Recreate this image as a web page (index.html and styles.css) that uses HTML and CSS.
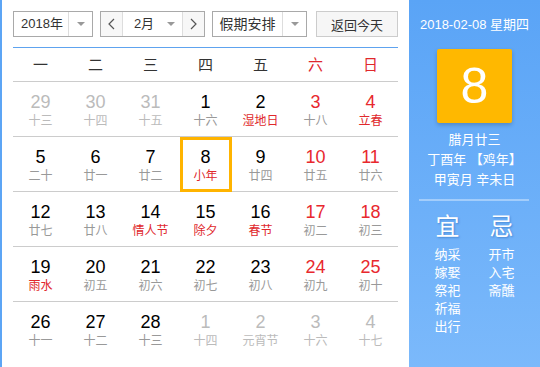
FILE: index.html
```html
<!DOCTYPE html>
<html lang="zh-CN">
<head>
    <meta charset="UTF-8">
    <meta name="viewport" content="width=device-width, initial-scale=1.0">
    <title>万年历</title>
    <link rel="stylesheet" href="styles.css">
</head>
<body>
    <div class="calendar">
        <div class="main">
            <div class="toolbar">
                <div class="select year-select">
                    <span class="select-text">2018年</span>
                    <span class="select-arrow"><i class="caret"></i></span>
                </div>
                <div class="select month-select">
                    <span class="nav prev"><svg width="7" height="12" viewBox="0 0 7 12"><polyline points="6,1 1,6 6,11" fill="none" stroke="#555" stroke-width="1.2"/></svg></span>
                    <span class="select-text">2月</span>
                    <span class="select-arrow plain"><i class="caret"></i></span>
                    <span class="nav next"><svg width="7" height="12" viewBox="0 0 7 12"><polyline points="1,1 6,6 1,11" fill="none" stroke="#555" stroke-width="1.2"/></svg></span>
                </div>
                <div class="select holiday-select">
                    <span class="select-text">假期安排</span>
                    <span class="select-arrow"><i class="caret"></i></span>
                </div>
                <button class="today-btn">返回今天</button>
            </div>

            <div class="weekdays">
                <span>一</span>
                <span>二</span>
                <span>三</span>
                <span>四</span>
                <span>五</span>
                <span class="red">六</span>
                <span class="red">日</span>
            </div>

            <div class="days">
                <div class="day other"><span class="num">29</span><span class="lunar">十三</span></div>
                <div class="day other"><span class="num">30</span><span class="lunar">十四</span></div>
                <div class="day other"><span class="num">31</span><span class="lunar">十五</span></div>
                <div class="day"><span class="num">1</span><span class="lunar">十六</span></div>
                <div class="day festival"><span class="num">2</span><span class="lunar">湿地日</span></div>
                <div class="day weekend"><span class="num">3</span><span class="lunar">十八</span></div>
                <div class="day weekend festival"><span class="num">4</span><span class="lunar">立春</span></div>

                <div class="day"><span class="num">5</span><span class="lunar">二十</span></div>
                <div class="day"><span class="num">6</span><span class="lunar">廿一</span></div>
                <div class="day"><span class="num">7</span><span class="lunar">廿二</span></div>
                <div class="day today festival"><span class="num">8</span><span class="lunar">小年</span></div>
                <div class="day"><span class="num">9</span><span class="lunar">廿四</span></div>
                <div class="day weekend"><span class="num">10</span><span class="lunar">廿五</span></div>
                <div class="day weekend"><span class="num">11</span><span class="lunar">廿六</span></div>

                <div class="day"><span class="num">12</span><span class="lunar">廿七</span></div>
                <div class="day"><span class="num">13</span><span class="lunar">廿八</span></div>
                <div class="day festival"><span class="num">14</span><span class="lunar">情人节</span></div>
                <div class="day festival"><span class="num">15</span><span class="lunar">除夕</span></div>
                <div class="day festival"><span class="num">16</span><span class="lunar">春节</span></div>
                <div class="day weekend"><span class="num">17</span><span class="lunar">初二</span></div>
                <div class="day weekend"><span class="num">18</span><span class="lunar">初三</span></div>

                <div class="day festival"><span class="num">19</span><span class="lunar">雨水</span></div>
                <div class="day"><span class="num">20</span><span class="lunar">初五</span></div>
                <div class="day"><span class="num">21</span><span class="lunar">初六</span></div>
                <div class="day"><span class="num">22</span><span class="lunar">初七</span></div>
                <div class="day"><span class="num">23</span><span class="lunar">初八</span></div>
                <div class="day weekend"><span class="num">24</span><span class="lunar">初九</span></div>
                <div class="day weekend"><span class="num">25</span><span class="lunar">初十</span></div>

                <div class="day last"><span class="num">26</span><span class="lunar">十一</span></div>
                <div class="day last"><span class="num">27</span><span class="lunar">十二</span></div>
                <div class="day last"><span class="num">28</span><span class="lunar">十三</span></div>
                <div class="day last other"><span class="num">1</span><span class="lunar">十四</span></div>
                <div class="day last other"><span class="num">2</span><span class="lunar">元宵节</span></div>
                <div class="day last other"><span class="num">3</span><span class="lunar">十六</span></div>
                <div class="day last other"><span class="num">4</span><span class="lunar">十七</span></div>
            </div>
        </div>

        <aside class="side">
            <div class="side-date">2018-02-08 星期四</div>
            <div class="big-day">8</div>
            <div class="lunar-info">
                <div>腊月廿三</div>
                <div>丁酉年 【鸡年】</div>
                <div>甲寅月 辛未日</div>
            </div>
            <div class="side-line"></div>
            <div class="almanac">
                <div class="almanac-col">
                    <div class="almanac-title">宜</div>
                    <div>纳采</div>
                    <div>嫁娶</div>
                    <div>祭祀</div>
                    <div>祈福</div>
                    <div>出行</div>
                </div>
                <div class="almanac-col">
                    <div class="almanac-title">忌</div>
                    <div>开市</div>
                    <div>入宅</div>
                    <div>斋醮</div>
                </div>
            </div>
        </aside>
    </div>
</body>
</html>
```

FILE: styles.css
```css
body {
    margin: 0;
    background-color: #fff;
    font-family: "Liberation Sans", "Noto Sans CJK SC", sans-serif;
}

.calendar {
    display: flex;
    height: 367px;
    border-left: 2px solid #5ca5f5;
}

.main {
    width: 407px;
    padding: 11px 0 0 11px;
    box-sizing: border-box;
}

/* toolbar */

.toolbar {
    display: flex;
    width: 385px;
    padding-bottom: 10px;
    border-bottom: 1px solid #5ea3ef;
}

.select {
    display: flex;
    height: 26px;
    box-sizing: border-box;
    border: 1px solid #a9a9a9;
    color: #333;
    font-size: 13px;
    line-height: 24px;
}

.select-text {
    flex: 1;
    text-align: center;
}

.select-arrow {
    width: 23px;
    border-left: 1px solid #ddd;
    display: flex;
    align-items: center;
    justify-content: center;
}

.select-arrow.plain {
    border-left: none;
}

.caret {
    width: 0;
    height: 0;
    border-left: 4px solid transparent;
    border-right: 4px solid transparent;
    border-top: 4px solid #999;
}

.year-select {
    width: 80px;
}

.year-select .select-text {
    padding-left: 2px;
}

.month-select {
    width: 105px;
    margin-left: 7px;
}

.month-select .select-text {
    padding-left: 6px;
}

.nav {
    width: 21px;
    display: flex;
    align-items: center;
    justify-content: center;
    background-color: #f7f7f7;
}

.nav.prev {
    border-right: 1px solid #ddd;
}

.nav.next {
    border-left: 1px solid #ddd;
}

.holiday-select {
    width: 95px;
    margin-left: 7px;
    font-size: 14px;
}

.today-btn {
    width: 82px;
    height: 26px;
    margin-left: 9px;
    padding: 0;
    border: 1px solid #ccc;
    background-color: #f6f6f6;
    color: #333;
    font-family: inherit;
    font-size: 13px;
}

/* grid */

.weekdays,
.days {
    display: grid;
    grid-template-columns: repeat(7, 55px);
}

.weekdays {
    border-bottom: 1px solid #ccc;
    width: 385px;
}

.weekdays span {
    height: 33px;
    line-height: 33px;
    text-align: center;
    font-size: 15px;
    color: #333;
}

.weekdays .red {
    color: #e0282c;
}

.day {
    position: relative;
    height: 55px;
    box-sizing: border-box;
    padding-top: 10px;
    border-bottom: 1px solid #ccc;
    display: flex;
    flex-direction: column;
    align-items: center;
}

.day.last {
    border-bottom: none;
}

.day .num {
    font-size: 18px;
    line-height: 20px;
    color: #000;
}

.day .lunar {
    font-size: 12px;
    line-height: 18px;
    color: #999;
}

.day.weekend .num {
    color: #e8282e;
}

.day.festival .lunar {
    color: #e0282c;
}

.day.other .num,
.day.other .lunar {
    color: #bbb;
}

.day.today::before {
    content: "";
    position: absolute;
    top: 0;
    bottom: -1px;
    left: 2px;
    right: 1px;
    border: 3px solid #ffb400;
}

/* side panel */

.side {
    flex: 1;
    background: linear-gradient(#5aa4f6, #7bb9fb);
    color: #fff;
    text-align: center;
    padding-top: 15px;
}

.side-date {
    font-size: 13px;
    line-height: 20px;
}

.big-day {
    width: 75px;
    height: 74px;
    margin: 14px auto 0;
    background-color: #ffb800;
    border-radius: 2px;
    box-shadow: 0 2px 4px rgba(0, 0, 0, 0.2);
    font-size: 50px;
    line-height: 74px;
}

.lunar-info {
    margin-top: 7px;
    font-size: 13px;
    line-height: 20px;
}

.side-line {
    height: 2px;
    margin: 9px 11px 0 10px;
    background-color: #a3cdfb;
}

.almanac {
    display: flex;
    justify-content: center;
    gap: 14px;
    margin-top: 12px;
    font-size: 13px;
    line-height: 18px;
}

.almanac-col {
    width: 40px;
}

.almanac-title {
    font-size: 24px;
    line-height: 28px;
    margin-bottom: 5px;
    text-shadow: 1px 1px 2px rgba(0, 60, 140, 0.35);
}
```
